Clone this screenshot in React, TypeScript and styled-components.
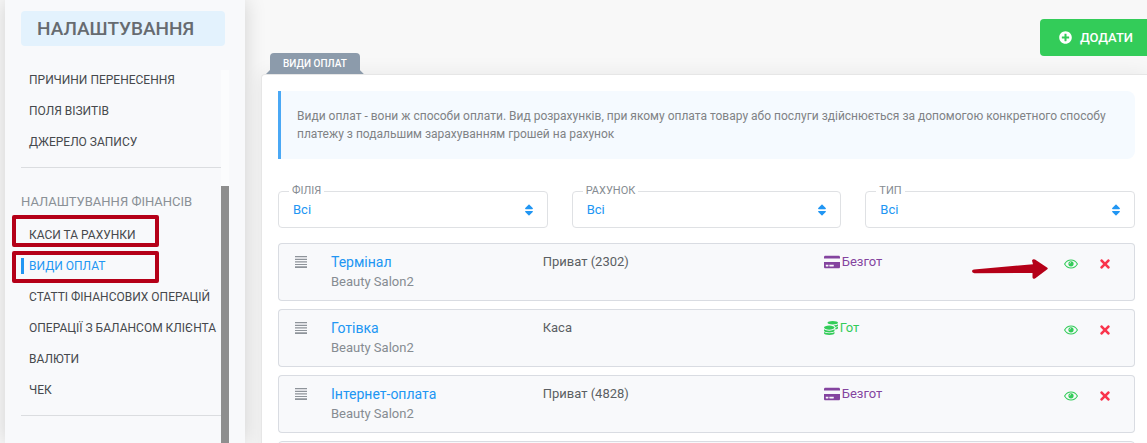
import React from "react";
import styled, { createGlobalStyle } from "styled-components";
import { FaPlusCircle, FaSort, FaTimes, FaCoins, FaCreditCard } from "react-icons/fa";

const GlobalStyle = createGlobalStyle`
  *, *::before, *::after { box-sizing: border-box; }
  body {
    margin: 0;
    background: #f8f8f8;
    color: #5b5f63;
    font-family: Roboto, "Liberation Sans", sans-serif;
    font-size: 13px;
  }
  button, select { font-family: inherit; }
`;

const Page = styled.div`
  display: flex;
  height: 100vh;
  overflow: hidden;
  padding-left: 5px;
`;

const Sidebar = styled.aside`
  display: flex;
  flex-direction: column;
  flex: none;
  width: 240px;
  padding-top: 11px;
  background: #f8f9fb;
  box-shadow: 0 0 20px rgba(0, 0, 0, 0.16);
`;

const SidebarTitle = styled.h1`
  margin: 0 20px 24px 16px;
  padding: 0 16px;
  border-radius: 4px;
  background: #e3f2fd;
  color: #666b70;
  font-size: 19px;
  font-weight: 500;
  line-height: 35px;
`;

const ScrollArea = styled.div`
  display: flex;
  flex: 1;
  min-height: 0;
  padding: 0 16px;
`;

const Nav = styled.nav`
  flex: 1;
  min-width: 0;
  margin-top: -6px;
`;

const Track = styled.div`
  flex: none;
  width: 8px;
  padding-top: 116px;
  background: #fbfcfd;
`;

const Thumb = styled.div`
  height: 100%;
  background: #8e8e8e;
`;

const NavList = styled.ul`
  margin: 0;
  padding: 0 0 10px;
  border-bottom: 1px solid #dbdde0;
  list-style: none;
`;

const NavHeading = styled.h2`
  margin: 24px 0 7px;
  color: #8a9096;
  font-size: 13px;
  font-weight: 400;
  line-height: 20px;
`;

const NavItem = styled.li`
  position: relative;
  display: flex;
  align-items: center;
  height: 31px;
`;

const NavLink = styled.a<{ $active?: boolean }>`
  padding-left: 5px;
  border-left: 3px solid ${(p) => (p.$active ? "#2196f3" : "transparent")};
  color: ${(p) => (p.$active ? "#2196f3" : "#46494d")};
  font-size: 12px;
  line-height: 16px;
  text-decoration: none;
  white-space: nowrap;
`;

const Marker = styled.span<{ $top: number }>`
  position: absolute;
  top: ${(p) => p.$top}px;
  left: -9px;
  width: 147px;
  height: 32px;
  border: 4px solid #b50018;
  border-radius: 2px;
  pointer-events: none;
`;

const Main = styled.main`
  display: flex;
  flex-direction: column;
  flex: 1;
  min-width: 0;
  padding: 19px 0 0 16px;
`;

const AddButton = styled.button`
  display: flex;
  flex: none;
  align-items: center;
  align-self: flex-end;
  gap: 8px;
  height: 37px;
  padding: 0 14px 0 19px;
  border: 0;
  border-radius: 4px 0 0 4px;
  background: #33cc59;
  color: #fff;
  font-size: 13px;
  font-weight: 500;
`;

const Panel = styled.section`
  flex: none;
  margin-top: -3px;
`;

const Tab = styled.h2`
  position: relative;
  width: fit-content;
  margin: 0 0 0 9px;
  padding: 0 13px;
  border-radius: 4px 4px 0 0;
  background: #8c9bab;
  color: #fff;
  font-size: 10px;
  font-weight: 500;
  line-height: 21px;

  &::after {
    content: "";
    position: absolute;
    right: -4px;
    bottom: 0;
    left: -4px;
    height: 4px;
    background: #8c9bab;
    clip-path: polygon(4px 0, calc(100% - 4px) 0, 100% 100%, 0 100%);
  }
`;

const Card = styled.div`
  padding: 16px 12px 16px 16px;
  border: 1px solid #e6e6e6;
  border-width: 1px 0 0 1px;
  border-radius: 4px 0 0 0;
  background: #fff;
  box-shadow: 0 0 20px rgba(0, 0, 0, 0.07);
`;

const Info = styled.p`
  margin: 0 0 32px;
  padding: 16px;
  border-left: 3px solid #4aa8f5;
  border-radius: 0 8px 8px 0;
  background: #f5faff;
  color: #808285;
  font-size: 12px;
  line-height: 18px;
`;

const Filters = styled.div`
  display: grid;
  grid-template-columns: repeat(3, 1fr);
  gap: 24px;
  margin-bottom: 7px;
`;

const Field = styled.div`
  position: relative;
  display: grid;
  align-items: center;
`;

const FieldLabel = styled.label`
  position: absolute;
  top: -8px;
  left: 11px;
  padding: 0 3px;
  background: #fff;
  color: #868c92;
  font-size: 11px;
  line-height: 16px;
`;

const Select = styled.select`
  grid-area: 1 / 1;
  height: 37px;
  padding: 0 32px 0 14px;
  border: 1px solid #dfe1e4;
  border-radius: 4px;
  background: #fff;
  color: #2196f3;
  font-size: 13px;
  appearance: none;
`;

const SelectIcon = styled(FaSort)`
  grid-area: 1 / 1;
  justify-self: end;
  margin-right: 12px;
  color: #2196f3;
  font-size: 14px;
  pointer-events: none;
`;

const Table = styled.table`
  width: 100%;
  border-collapse: separate;
  border-spacing: 0 8px;
  table-layout: fixed;
`;

const Cell = styled.td<{ $width: string }>`
  width: ${(p) => p.$width};
  height: 58px;
  padding: 8px 0;
  border: 1px solid #d9dce2;
  border-width: 1px 0;
  background: #f8f9fb;
  line-height: 20px;
  vertical-align: top;
  white-space: nowrap;

  &:first-child {
    padding-left: 16px;
    border-left-width: 1px;
    border-radius: 4px 0 0 4px;
  }
  &:last-child {
    border-right-width: 1px;
    border-radius: 0 4px 4px 0;
  }
  &:only-child { border-radius: 4px; }
`;

const Handle = styled.svg`
  display: block;
  width: 12px;
  height: 12px;
  margin-top: 4px;
  fill: #8e949a;
`;

const Name = styled.a`
  display: block;
  color: #2196f3;
  font-size: 14px;
  text-decoration: none;
`;

const Branch = styled.div`
  color: #868c92;
`;

const Kind = styled.span<{ $cash?: boolean }>`
  display: flex;
  align-items: center;
  gap: 2px;
  color: ${(p) => (p.$cash ? "#33cc59" : "#84449f")};

  svg { font-size: ${(p) => (p.$cash ? 14 : 16)}px; }
`;

const Actions = styled.div`
  position: relative;
  display: flex;
  align-items: center;
  gap: 20px;
  padding-top: 5px;
`;

const IconButton = styled.button<{ $color: string }>`
  display: flex;
  padding: 0;
  border: 0;
  background: none;
  color: ${(p) => p.$color};
  font-size: 14px;
`;

const Arrow = styled.svg`
  position: absolute;
  top: 7px;
  left: -92px;
  width: 76px;
  height: 20px;
  fill: #b50018;
  pointer-events: none;
`;

type NavEntry = { label: string; active?: boolean; markerTop?: number };

const visitLinks: NavEntry[] = [
  { label: "ПРИЧИНИ ПЕРЕНЕСЕННЯ" },
  { label: "ПОЛЯ ВІЗИТІВ" },
  { label: "ДЖЕРЕЛО ЗАПИСУ" },
];

const financeLinks: NavEntry[] = [
  { label: "КАСИ ТА РАХУНКИ", markerTop: -4 },
  { label: "ВИДИ ОПЛАТ", active: true, markerTop: 1 },
  { label: "СТАТТІ ФІНАНСОВИХ ОПЕРАЦІЙ" },
  { label: "ОПЕРАЦІЇ З БАЛАНСОМ КЛІЄНТА" },
  { label: "ВАЛЮТИ" },
  { label: "ЧЕК" },
];

const filters = [
  { id: "branch", label: "ФІЛІЯ" },
  { id: "account", label: "РАХУНОК" },
  { id: "type", label: "ТИП" },
];

const payments = [
  { name: "Термінал", account: "Приват (2302)", cash: false, pointed: true },
  { name: "Готівка", account: "Каса", cash: true, pointed: false },
  { name: "Інтернет-оплата", account: "Приват (4828)", cash: false, pointed: false },
];

function NavGroup({ items }: { items: NavEntry[] }) {
  return (
    <NavList>
      {items.map((item) => (
        <NavItem key={item.label}>
          <NavLink href="#" $active={item.active}>{item.label}</NavLink>
          {item.markerTop !== undefined && <Marker $top={item.markerTop} />}
        </NavItem>
      ))}
    </NavList>
  );
}

function EyeIcon() {
  return (
    <svg width="14" height="14" viewBox="0 0 14 14" fill="none" stroke="currentColor">
      <path d="M.6 7C2 4.500 4.300 3 7 3s5 1.500 6.400 4C12 9.500 9.700 11 7 11S2 9.500.6 7z" strokeWidth="1.1" />
      <circle cx="7" cy="6.800" r="2.600" fill="currentColor" stroke="none" />
      <path d="M5.700 6.700q0-1.200 1.200-1.300" stroke="#f8f9fb" strokeWidth=".7" />
    </svg>
  );
}

export default function App() {
  return (
    <>
      <GlobalStyle />
      <Page>
        <Sidebar>
          <SidebarTitle>НАЛАШТУВАННЯ</SidebarTitle>
          <ScrollArea>
            <Nav>
              <NavGroup items={visitLinks} />
              <NavHeading>НАЛАШТУВАННЯ ФІНАНСІВ</NavHeading>
              <NavGroup items={financeLinks} />
            </Nav>
            <Track><Thumb /></Track>
          </ScrollArea>
        </Sidebar>
        <Main>
          <AddButton type="button"><FaPlusCircle />ДОДАТИ</AddButton>
          <Panel>
            <Tab>ВИДИ ОПЛАТ</Tab>
            <Card>
              <Info>
                Види оплат - вони ж способи оплати. Вид розрахунків, при якому оплата товару або послуги здійснюється за допомогою конкретного способу платежу з подальшим зарахуванням грошей на рахунок
              </Info>
              <Filters>
                {filters.map((f) => (
                  <Field key={f.id}>
                    <Select id={f.id}><option>Всі</option></Select>
                    <SelectIcon />
                    <FieldLabel htmlFor={f.id}>{f.label}</FieldLabel>
                  </Field>
                ))}
              </Filters>
              <Table>
                <tbody>
                  {payments.map((p) => (
                    <tr key={p.name}>
                      <Cell $width="53px">
                        <Handle viewBox="0 0 12 12">
                          <path d="M0 0h12v1.300H0zM0 2.700h12v1.200H0zM0 5.300h12v1.200H0zM0 7.900h12v1.200H0zM0 10.300h12V12H0z" />
                        </Handle>
                      </Cell>
                      <Cell $width="24.7%">
                        <Name href="#">{p.name}</Name>
                        <Branch>Beauty Salon2</Branch>
                      </Cell>
                      <Cell $width="32.8%">{p.account}</Cell>
                      <Cell $width="auto">
                        <Kind $cash={p.cash}>
                          {p.cash ? <FaCoins /> : <FaCreditCard />}
                          {p.cash ? "Гот" : "Безгот"}
                        </Kind>
                      </Cell>
                      <Cell $width="71px">
                        <Actions>
                          <IconButton type="button" aria-label="Показати" $color="#33cc59"><EyeIcon /></IconButton>
                          <IconButton type="button" aria-label="Видалити" $color="#f9344c"><FaTimes /></IconButton>
                          {p.pointed && (
                            <Arrow viewBox="0 0 76 20">
                              <path d="M2 10.500 61 5.300 60 1.500Q61-.5 63 .5l12 8q1.500 1 0 2L63 19.500q-2 1-2.500-1V14L2.500 14.300Q0 14 0 12.300T2 10.500z" />
                            </Arrow>
                          )}
                        </Actions>
                      </Cell>
                    </tr>
                  ))}
                  <tr><Cell $width="auto" colSpan={5} /></tr>
                </tbody>
              </Table>
            </Card>
          </Panel>
        </Main>
      </Page>
    </>
  );
}
